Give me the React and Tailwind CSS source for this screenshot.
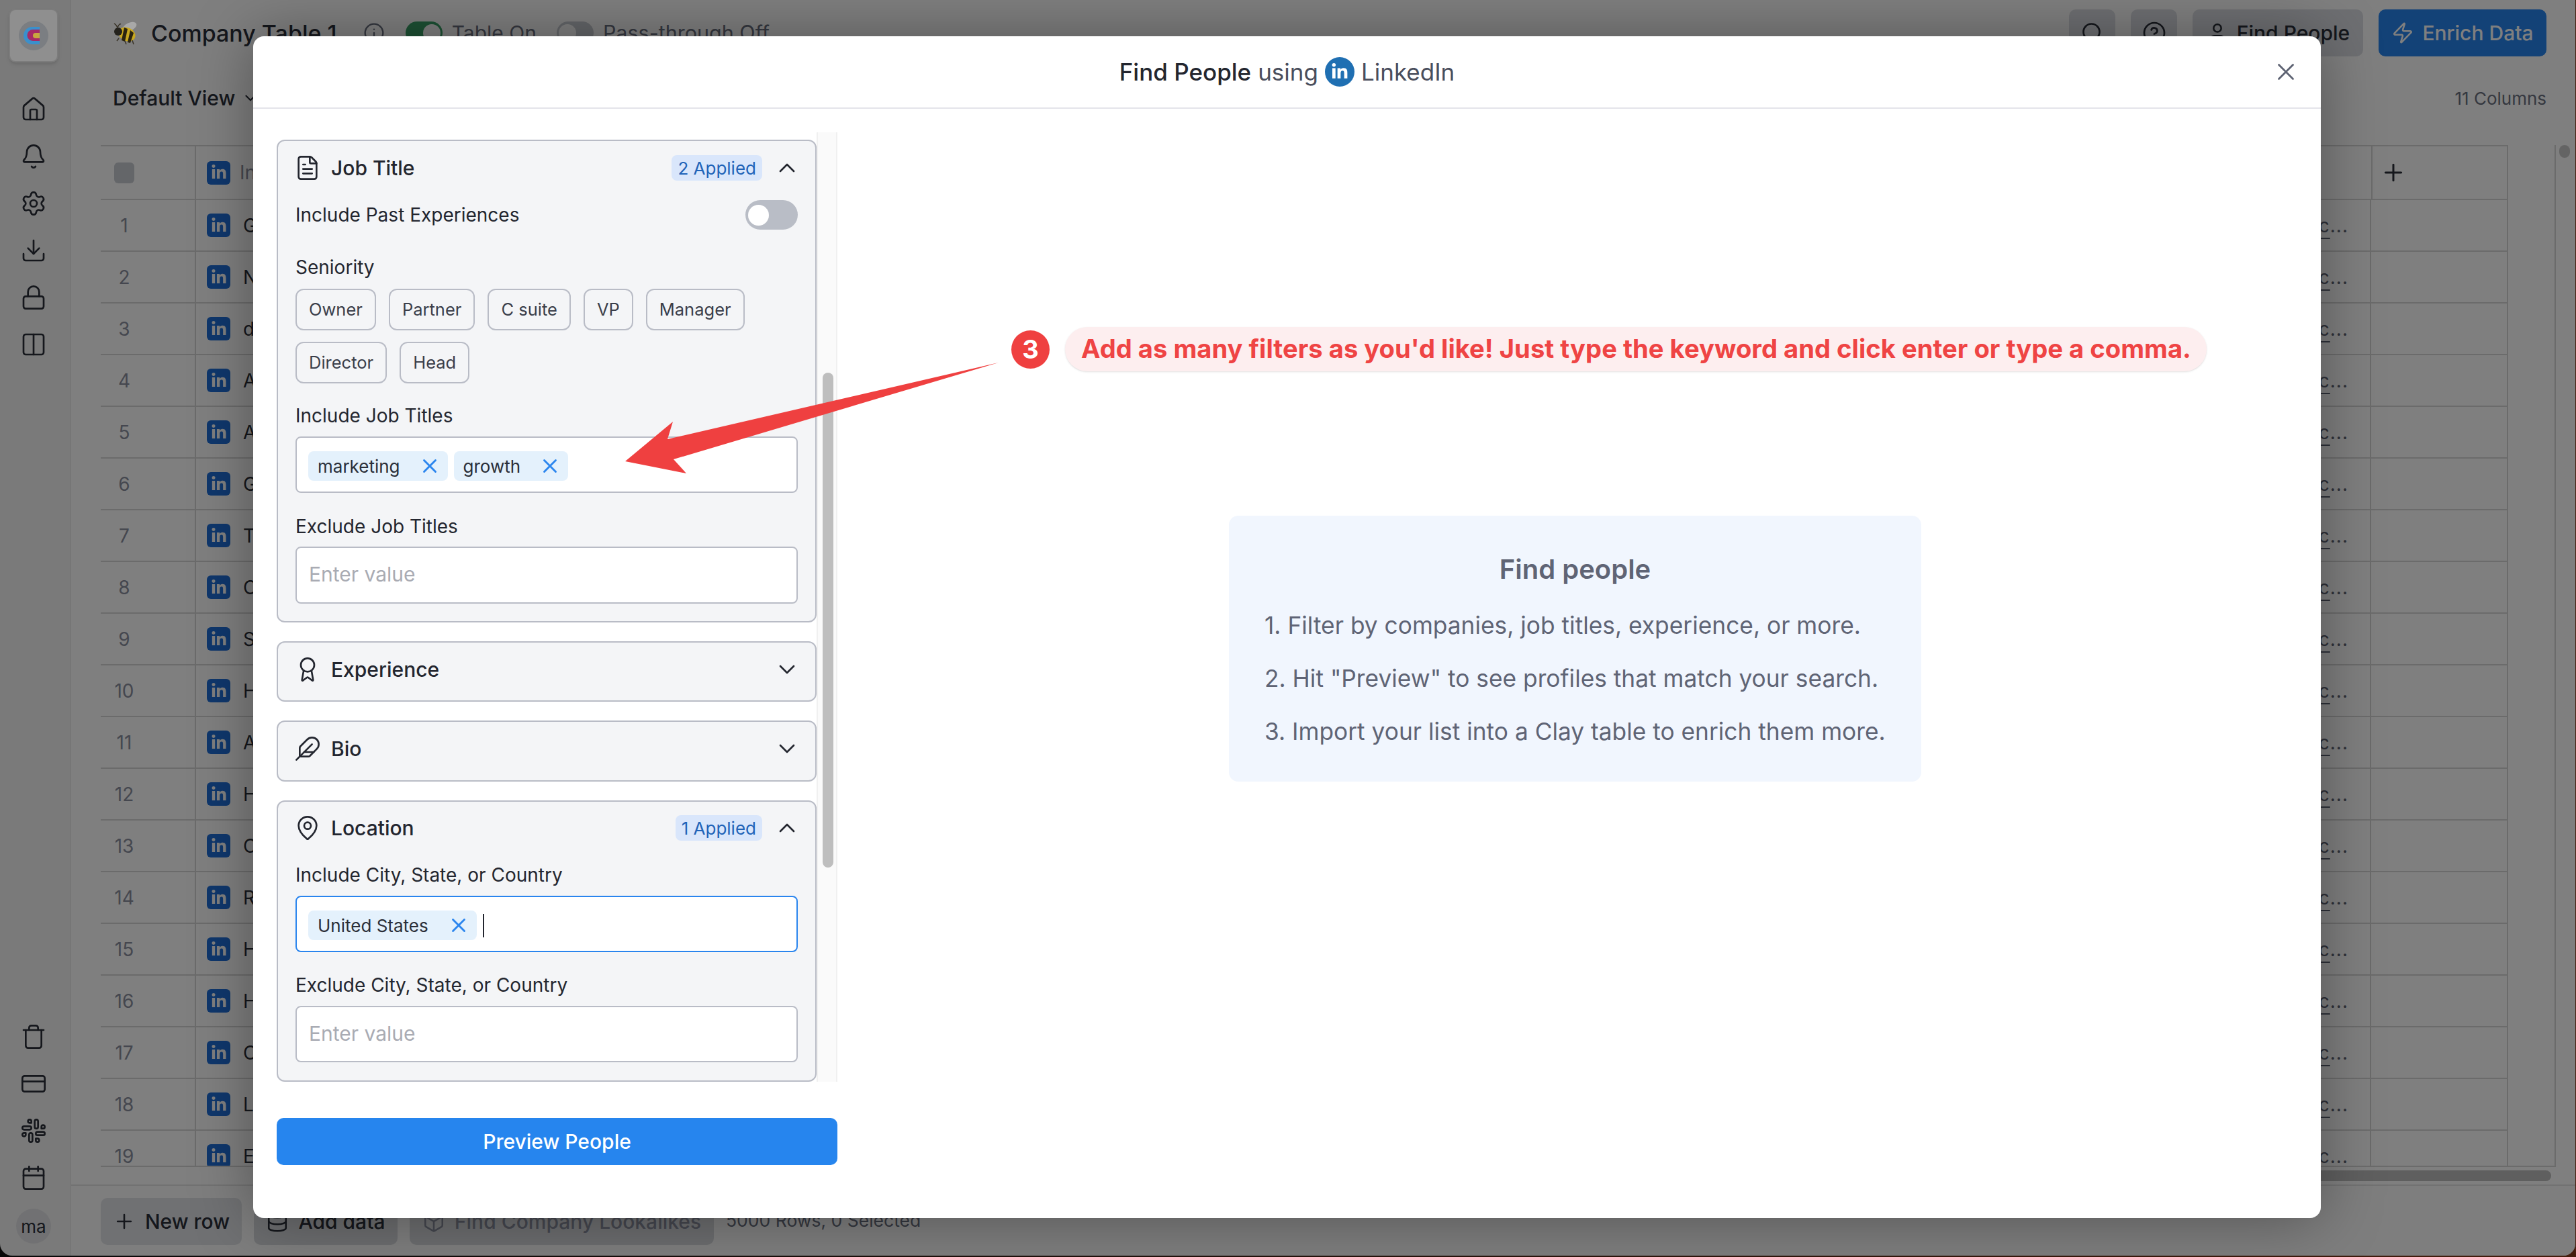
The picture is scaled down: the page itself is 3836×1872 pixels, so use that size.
import {
  Award, Bell, Box, Calendar, ChevronDown, ChevronUp, CircleHelp, Columns2, CreditCard, Database, Download, Feather,
  FileText, House, Info, Lock, MapPin, Plus, Search, Settings, Slack, Trash, User, X, Zap,
} from 'lucide-react';
import { FaLinkedinIn } from 'react-icons/fa';

const rowInitials = ['G', 'N', 'd', 'A', 'A', 'G', 'T', 'C', 'S', 'H', 'A', 'H', 'C', 'R', 'H', 'H', 'C', 'L', 'E'];
const seniority = ['Owner', 'Partner', 'C suite', 'VP', 'Manager', 'Director', 'Head'];

function Logo() {
  return (
    <div className="relative z-20 mt-[13px] flex h-[80px] w-[74px] items-center justify-center rounded-[10px] border-2 border-[#7c7c7c] bg-[#8f8f8f] shadow-md">
      <svg width="44" height="44" viewBox="0 0 44 44">
        <circle cx="22" cy="22" r="22" fill="#7b7e82" />
        <path d="M31 9H20a13 13 0 0 0 0 26h11z" fill="#3a90cc" />
        <path d="M31 13H21a8.500 8.500 0 0 0 0 17h10z" fill="#a52a66" />
        <path d="M31 18H25a4 4 0 0 0 0 8h6z" fill="#c9a63f" />
      </svg>
    </div>
  );
}

function Bee() {
  return (
    <svg className="relative z-20 shrink-0" width="36" height="38" viewBox="0 0 36 38">
      <ellipse cx="25" cy="10" rx="11" ry="6" transform="rotate(-25 25 10)" fill="#a8a8a8" />
      <ellipse cx="21" cy="21" rx="13" ry="10" transform="rotate(25 21 21)" fill="#c9a81f" />
      <path d="M17 11l-4 19 5 2 4-19zM26 15l-4 18 4 1 5-15z" fill="#2b2410" />
      <circle cx="8" cy="17" r="6" fill="#24221c" />
      <path d="M7 11C5 6 3 6 2 5M7 11c2-4 3-6 5-5M9 27l-3 4M18 31l2 5M29 30l2 6" stroke="#3a3428" strokeWidth="1.500" fill="none" />
    </svg>
  );
}

function LinkedInSquare() {
  return (
    <div className="flex h-[35px] w-[35px] shrink-0 items-center justify-center rounded-[6px] bg-[#1f6fd8] text-white">
      <FaLinkedinIn size={24} />
    </div>
  );
}

function Switch({ on }) {
  return (
    <div className={on ? 'flex h-[34px] w-[55px] items-center justify-end rounded-full bg-[#3aa368] px-[3px]' : 'flex h-[34px] w-[55px] items-center rounded-full bg-[#c9ccd3] px-[3px]'}>
      <div className="h-[26px] w-[26px] rounded-full bg-white" />
    </div>
  );
}

function Sidebar() {
  const top = [House, Bell, Settings, Download, Lock, Columns2];
  const bottom = [Trash, CreditCard, Slack, Calendar];
  return (
    <aside className="flex w-[106px] shrink-0 flex-col items-center border-r-2 border-[#ececec] bg-[#f4f4f4] pr-[4px] text-[#2a2e38]">
      <Logo />
      <div className="mt-[50px] flex flex-col gap-[30px]">
        {top.map((Icon, i) => <Icon key={i} size={40} strokeWidth={1.6} />)}
      </div>
      <div className="mt-auto flex flex-col items-center gap-[30px]">
        {bottom.map((Icon, i) => <Icon key={i} size={40} strokeWidth={1.6} />)}
      </div>
      <div className="mt-[26px] mb-[18px] flex h-[52px] w-[52px] items-center justify-center rounded-full bg-[#e2e3e6] text-[26px] text-[#2a2e38]">ma</div>
    </aside>
  );
}

function TopBar() {
  return (
    <div className="flex h-[98px] shrink-0 items-center pl-[62px] pr-[43px]">
      <Bee />
      <span className="ml-[21px] text-[34px] font-medium text-[#2a2e38]">Company Table 1</span>
      <Info className="ml-[39px] text-[#6b7080]" size={32} strokeWidth={1.8} />
      <div className="ml-[31px]"><Switch on /></div>
      <span className="ml-[14px] text-[30px] text-[#6b7080]">Table On</span>
      <div className="ml-[30px]"><Switch /></div>
      <span className="ml-[14px] text-[30.5px] text-[#6b7080]">Pass-through Off</span>
      <div className="ml-auto flex gap-[23px]">
        <div className="flex h-[70px] w-[69px] items-center justify-center rounded-[10px] bg-[#dcdfe4] text-[#2a2e38]"><Search size={36} strokeWidth={1.8} /></div>
        <div className="flex h-[70px] w-[69px] items-center justify-center rounded-[10px] bg-[#dcdfe4] text-[#2a2e38]"><CircleHelp size={36} strokeWidth={1.8} /></div>
        <div className="flex h-[70px] w-[254px] items-center justify-center gap-[12px] rounded-[10px] bg-[#dcdfe4] text-[30px] font-medium text-[#2a2e38]"><User size={34} strokeWidth={1.8} />Find People</div>
        <div className="flex h-[70px] w-[250px] items-center justify-center gap-[12px] rounded-[10px] bg-[#2685ee] text-[30px] font-medium text-white"><Zap size={34} strokeWidth={1.8} />Enrich Data</div>
      </div>
    </div>
  );
}

function TableRow({ num, initial }) {
  return (
    <div className="flex h-[77px] shrink-0 items-stretch border-b-2 border-[#d6d6d6] text-[28px]">
      <div className="flex w-[140px] shrink-0 items-center pl-[20px]">
        <span className="w-[30px] text-center text-[#8a8f9e]">{num}</span>
      </div>
      <div className="flex flex-1 items-center gap-[19px] border-l-2 border-[#d6d6d6] pl-[16px] text-[#2a2e38]">
        <LinkedInSquare />
        <span>{initial}</span>
      </div>
      <div className="flex w-[120px] shrink-0 items-center justify-end pr-[32px] text-[#5d6272]">
        <span className="tracking-[1px]"><span className="underline decoration-2 underline-offset-[8px]">.c</span>...</span>
      </div>
      <div className="w-[204px] shrink-0 border-l-2 border-[#d6d6d6]" />
    </div>
  );
}

function Table() {
  return (
    <div className="ml-[44px] flex h-[1522px] shrink-0 overflow-hidden">
      <div className="flex w-[3656px] shrink-0 border-r-2 border-b-2 border-[#d6d6d6]">
        <div className="flex w-[3585px] shrink-0 flex-col overflow-hidden border-t-2 border-r-2 border-[#d6d6d6]">
          <div className="flex h-[80px] shrink-0 items-stretch border-b-2 border-[#d6d6d6] text-[28px]">
            <div className="flex w-[140px] shrink-0 items-center pl-[20px]">
              <div className="h-[31px] w-[30px] rounded-[6px] bg-[#c9ccd3]" />
            </div>
            <div className="flex flex-1 items-center gap-[14px] border-l-2 border-[#d6d6d6] pl-[16px] text-[#8a8f9e]">
              <LinkedInSquare />
              <span>In</span>
            </div>
            <div className="flex w-[202px] shrink-0 items-center border-l-2 border-[#d6d6d6] pl-[11px] text-[#2a2e38]">
              <Plus size={40} strokeWidth={1.8} />
            </div>
          </div>
          {rowInitials.map((initial, i) => <TableRow key={i} num={i + 1} initial={initial} />)}
        </div>
      </div>
      <div className="ml-[5px] h-[19px] w-[16px] rounded-full bg-[#c9c9c9]" />
    </div>
  );
}

function MainPage() {
  return (
    <main className="flex min-w-0 flex-1 flex-col bg-white">
      <TopBar />
      <div className="flex h-[118px] shrink-0 items-center pr-[43px] pl-[62px] pb-[22px]">
        <span className="text-[30px] font-medium text-[#2a2e38]">Default View</span>
        <ChevronDown className="ml-[10px] text-[#2a2e38]" size={26} />
        <span className="ml-auto text-[26px] text-[#6b7080]">11 Columns</span>
      </div>
      <Table />
      <div className="flex h-[26px] shrink-0 items-center justify-end pr-[36px]">
        <div className="h-[16px] w-[3400px] rounded-full bg-[#bebebe]" />
      </div>
      <div className="flex flex-1 items-start gap-[18px] border-t-2 border-[#e4e4e4] bg-[#fdfdfd] pt-[18px] pl-[44px] text-[30px]">
        <div className="flex h-[70px] w-[210px] items-center justify-center gap-[14px] rounded-[10px] bg-[#e0e2e6] font-medium text-[#2a2e38]"><Plus size={34} strokeWidth={1.8} />New row</div>
        <div className="flex h-[70px] w-[214px] items-center justify-center gap-[14px] rounded-[10px] bg-[#d9dbdf] font-medium text-[#2a2e38]"><Database size={34} strokeWidth={1.8} />Add data</div>
        <div className="flex h-[70px] w-[453px] items-center justify-center gap-[14px] rounded-[10px] bg-[#d9dbdf] font-medium text-[#8a8f9e]"><Box size={34} strokeWidth={1.8} />Find Company Lookalikes</div>
        <span className="self-center pb-[18px] text-[26.5px] text-[#6b7080]">5000 Rows, 0 Selected</span>
      </div>
    </main>
  );
}

function Chip({ label }) {
  return <div className="flex h-[62px] items-center rounded-[12px] border-2 border-[#b9bcc6] px-[18px] text-[25.5px] text-[#3a3e4a]">{label}</div>;
}

function Tag({ label, gap }) {
  return (
    <div className="flex h-[44px] items-center rounded-[8px] bg-[#e4f1fc] pr-[10px] pl-[14px] text-[26px] text-[#2a2e38]">
      <span>{label}</span>
      <X className={gap} size={34} strokeWidth={2} color="#2a85ee" />
    </div>
  );
}

function Label({ children, className }) {
  return <div className={`flex h-[34px] items-center text-[28px] text-[#23262f] ${className}`}>{children}</div>;
}

function EmptyInput({ className }) {
  return <input readOnly placeholder="Enter value" className={`w-full rounded-[8px] border-2 border-[#b9bcc6] bg-white pb-[3px] pl-[18px] text-[30px] outline-none placeholder:text-[#a9abb3] ${className}`} />;
}

function CardHeader({ icon: Icon, title, applied, open, height = 'h-[80px]' }) {
  const Chevron = open ? ChevronUp : ChevronDown;
  return (
    <div className={`flex items-center ${height}`}>
      <Icon className="-ml-[2px] shrink-0" size={40} strokeWidth={1.6} color="#23262f" />
      <span className="ml-[15px] text-[30px] font-medium text-[#23262f]">{title}</span>
      {applied ? <span className="ml-auto flex h-[38px] items-center rounded-[8px] bg-[#d9e6fb] px-[9px] text-[26px] text-[#1f63b8]">{applied}</span> : null}
      <Chevron className={applied ? 'ml-[17px] -mr-[4px]' : 'ml-auto -mr-[4px]'} size={40} strokeWidth={1.6} color="#23262f" />
    </div>
  );
}

function FilterPanel() {
  return (
    <div className="flex h-[1414px]">
      <div className="flex w-[804px] shrink-0 flex-col gap-[28px] pt-[11px]">
        <section className="rounded-[12px] border-2 border-[#b9bcc6] bg-[#f4f5f7] px-[26px] pb-[26px]">
          <CardHeader icon={FileText} title="Job Title" applied="2 Applied" open />
          <div className="mt-[8px] flex h-[44px] items-center justify-between">
            <span className="text-[28px] text-[#23262f]">Include Past Experiences</span>
            <div className="flex h-[44px] w-[78px] items-center rounded-full bg-[#b9bdc6] pl-[4px]"><div className="h-[31px] w-[31px] rounded-full bg-white" /></div>
          </div>
          <Label className="mt-[39px]">Seniority</Label>
          <div className="mt-[15px] flex flex-wrap gap-x-[19px] gap-y-[17px]">
            {seniority.map((s) => <Chip key={s} label={s} />)}
          </div>
          <Label className="mt-[31px]">Include Job Titles</Label>
          <div className="mt-[14px] flex h-[84px] items-center gap-[9px] rounded-[8px] border-2 border-[#b9bcc6] bg-white pt-[4px] pl-[17px]">
            <Tag label="marketing" gap="ml-[27px]" />
            <Tag label="growth" gap="ml-[27px]" />
          </div>
          <Label className="mt-[33px]">Exclude Job Titles</Label>
          <EmptyInput className="mt-[13px] h-[85px]" />
        </section>
        <section className="h-[90px] rounded-[12px] border-2 border-[#b9bcc6] bg-[#f4f5f7] px-[26px]">
          <CardHeader icon={Award} title="Experience" />
        </section>
        <section className="h-[91px] rounded-[12px] border-2 border-[#b9bcc6] bg-[#f4f5f7] px-[26px]">
          <CardHeader icon={Feather} title="Bio" />
        </section>
        <section className="rounded-[12px] border-2 border-[#b9bcc6] bg-[#f4f5f7] px-[26px] pb-[27px]">
          <CardHeader icon={MapPin} title="Location" applied="1 Applied" open height="h-[78px]" />
          <Label className="mt-[14px]">Include City, State, or Country</Label>
          <div className="mt-[14px] flex h-[84px] items-center gap-[9px] rounded-[8px] border-2 border-[#2a85ee] bg-white pt-[4px] pl-[17px]">
            <Tag label="United States" gap="ml-[28px]" />
            <div className="h-[35px] w-[2px] bg-[#23262f]" />
          </div>
          <Label className="mt-[32px]">Exclude City, State, or Country</Label>
          <EmptyInput className="mt-[14px] h-[84px]" />
        </section>
      </div>
      <div className="relative w-[31px] shrink-0 border-x-2 border-[#f0f0f0] bg-[#fafafa]">
        <div className="absolute top-[358px] left-[7px] h-[737px] w-[16px] rounded-full bg-[#bebebe]" />
      </div>
    </div>
  );
}

function Modal() {
  return (
    <div className="absolute top-[54px] left-[377px] flex h-[1760px] w-[3079px] flex-col rounded-[16px] bg-white shadow-[0_0_90px_rgba(0,0,0,0.35)]">
      <div className="relative flex h-[108px] shrink-0 items-center justify-center border-b-2 border-[#e4e4ea]">
        <span className="text-[35px] font-medium text-[#23262f]">Find People</span>
        <span className="ml-[10px] text-[35px] text-[#4a4e5c]">using</span>
        <div className="ml-[10px] flex h-[44px] w-[44px] items-center justify-center rounded-full bg-[#1f6fb2] text-white"><FaLinkedinIn size={26} /></div>
        <span className="ml-[10px] text-[35px] text-[#4a4e5c]">LinkedIn</span>
        <X className="absolute right-[31px] top-[32px] text-[#5d6272]" size={42} strokeWidth={1.6} />
      </div>
      <div className="flex min-h-0 flex-1">
        <div className="ml-[35px] w-[835px] shrink-0 pt-[35px]">
          <FilterPanel />
          <button className="mt-[54px] h-[70px] w-full rounded-[10px] bg-[#2685ee] text-[30px] font-medium text-white">Preview People</button>
        </div>
        <div className="ml-[583px] mt-[606px] h-[396px] w-[1031px] shrink-0 rounded-[14px] bg-[#f1f6fe] pt-[56px] pl-[53px] text-[#5f6475]">
          <div className="-ml-[53px] flex h-[48px] items-center justify-center text-[40px] font-semibold">Find people</div>
          <div className="mt-[36px] flex flex-col gap-[31px] text-[35.3px]">
            <p className="h-[48px] leading-[48px]">1. Filter by companies, job titles, experience, or more.</p>
            <p className="h-[48px] leading-[48px]">2. Hit "Preview" to see profiles that match your search.</p>
            <p className="h-[48px] leading-[48px]">3. Import your list into a Clay table to enrich them more.</p>
          </div>
        </div>
      </div>
      {/* tutorial annotation on top of the dialog */}
      <svg className="absolute top-[484px] left-[554px]" width="560" height="170" viewBox="0 0 560 170">
        <polygon points="0,149 71,90 63,116 556,2 72,146 91,167" fill="#ef4040" />
      </svg>
      <div className="absolute top-[433px] left-[1129px] flex items-center gap-[23px]">
        <div className="flex h-[57px] w-[57px] items-center justify-center rounded-full bg-[#ef4040] text-[38px] font-bold text-white">3</div>
        <div className="flex h-[66px] w-[1700px] items-center rounded-full bg-[#fdeeef] pl-[24px] text-[38.2px] font-bold whitespace-nowrap text-[#ef4444] shadow-sm">Add as many filters as you'd like! Just type the keyword and click enter or type a comma.</div>
      </div>
    </div>
  );
}

export default function App() {
  return (
    <div className="relative h-[1872px] w-[3836px] overflow-hidden bg-gradient-to-r from-[#111111] to-[#8a3a1a] font-[Inter,sans-serif]">
      <div className="flex h-[1870px] w-[3835px] overflow-hidden rounded-b-[18px]">
        <Sidebar />
        <MainPage />
      </div>
      <div className="absolute inset-0 z-10 bg-black/50">
        <Modal />
      </div>
    </div>
  );
}
